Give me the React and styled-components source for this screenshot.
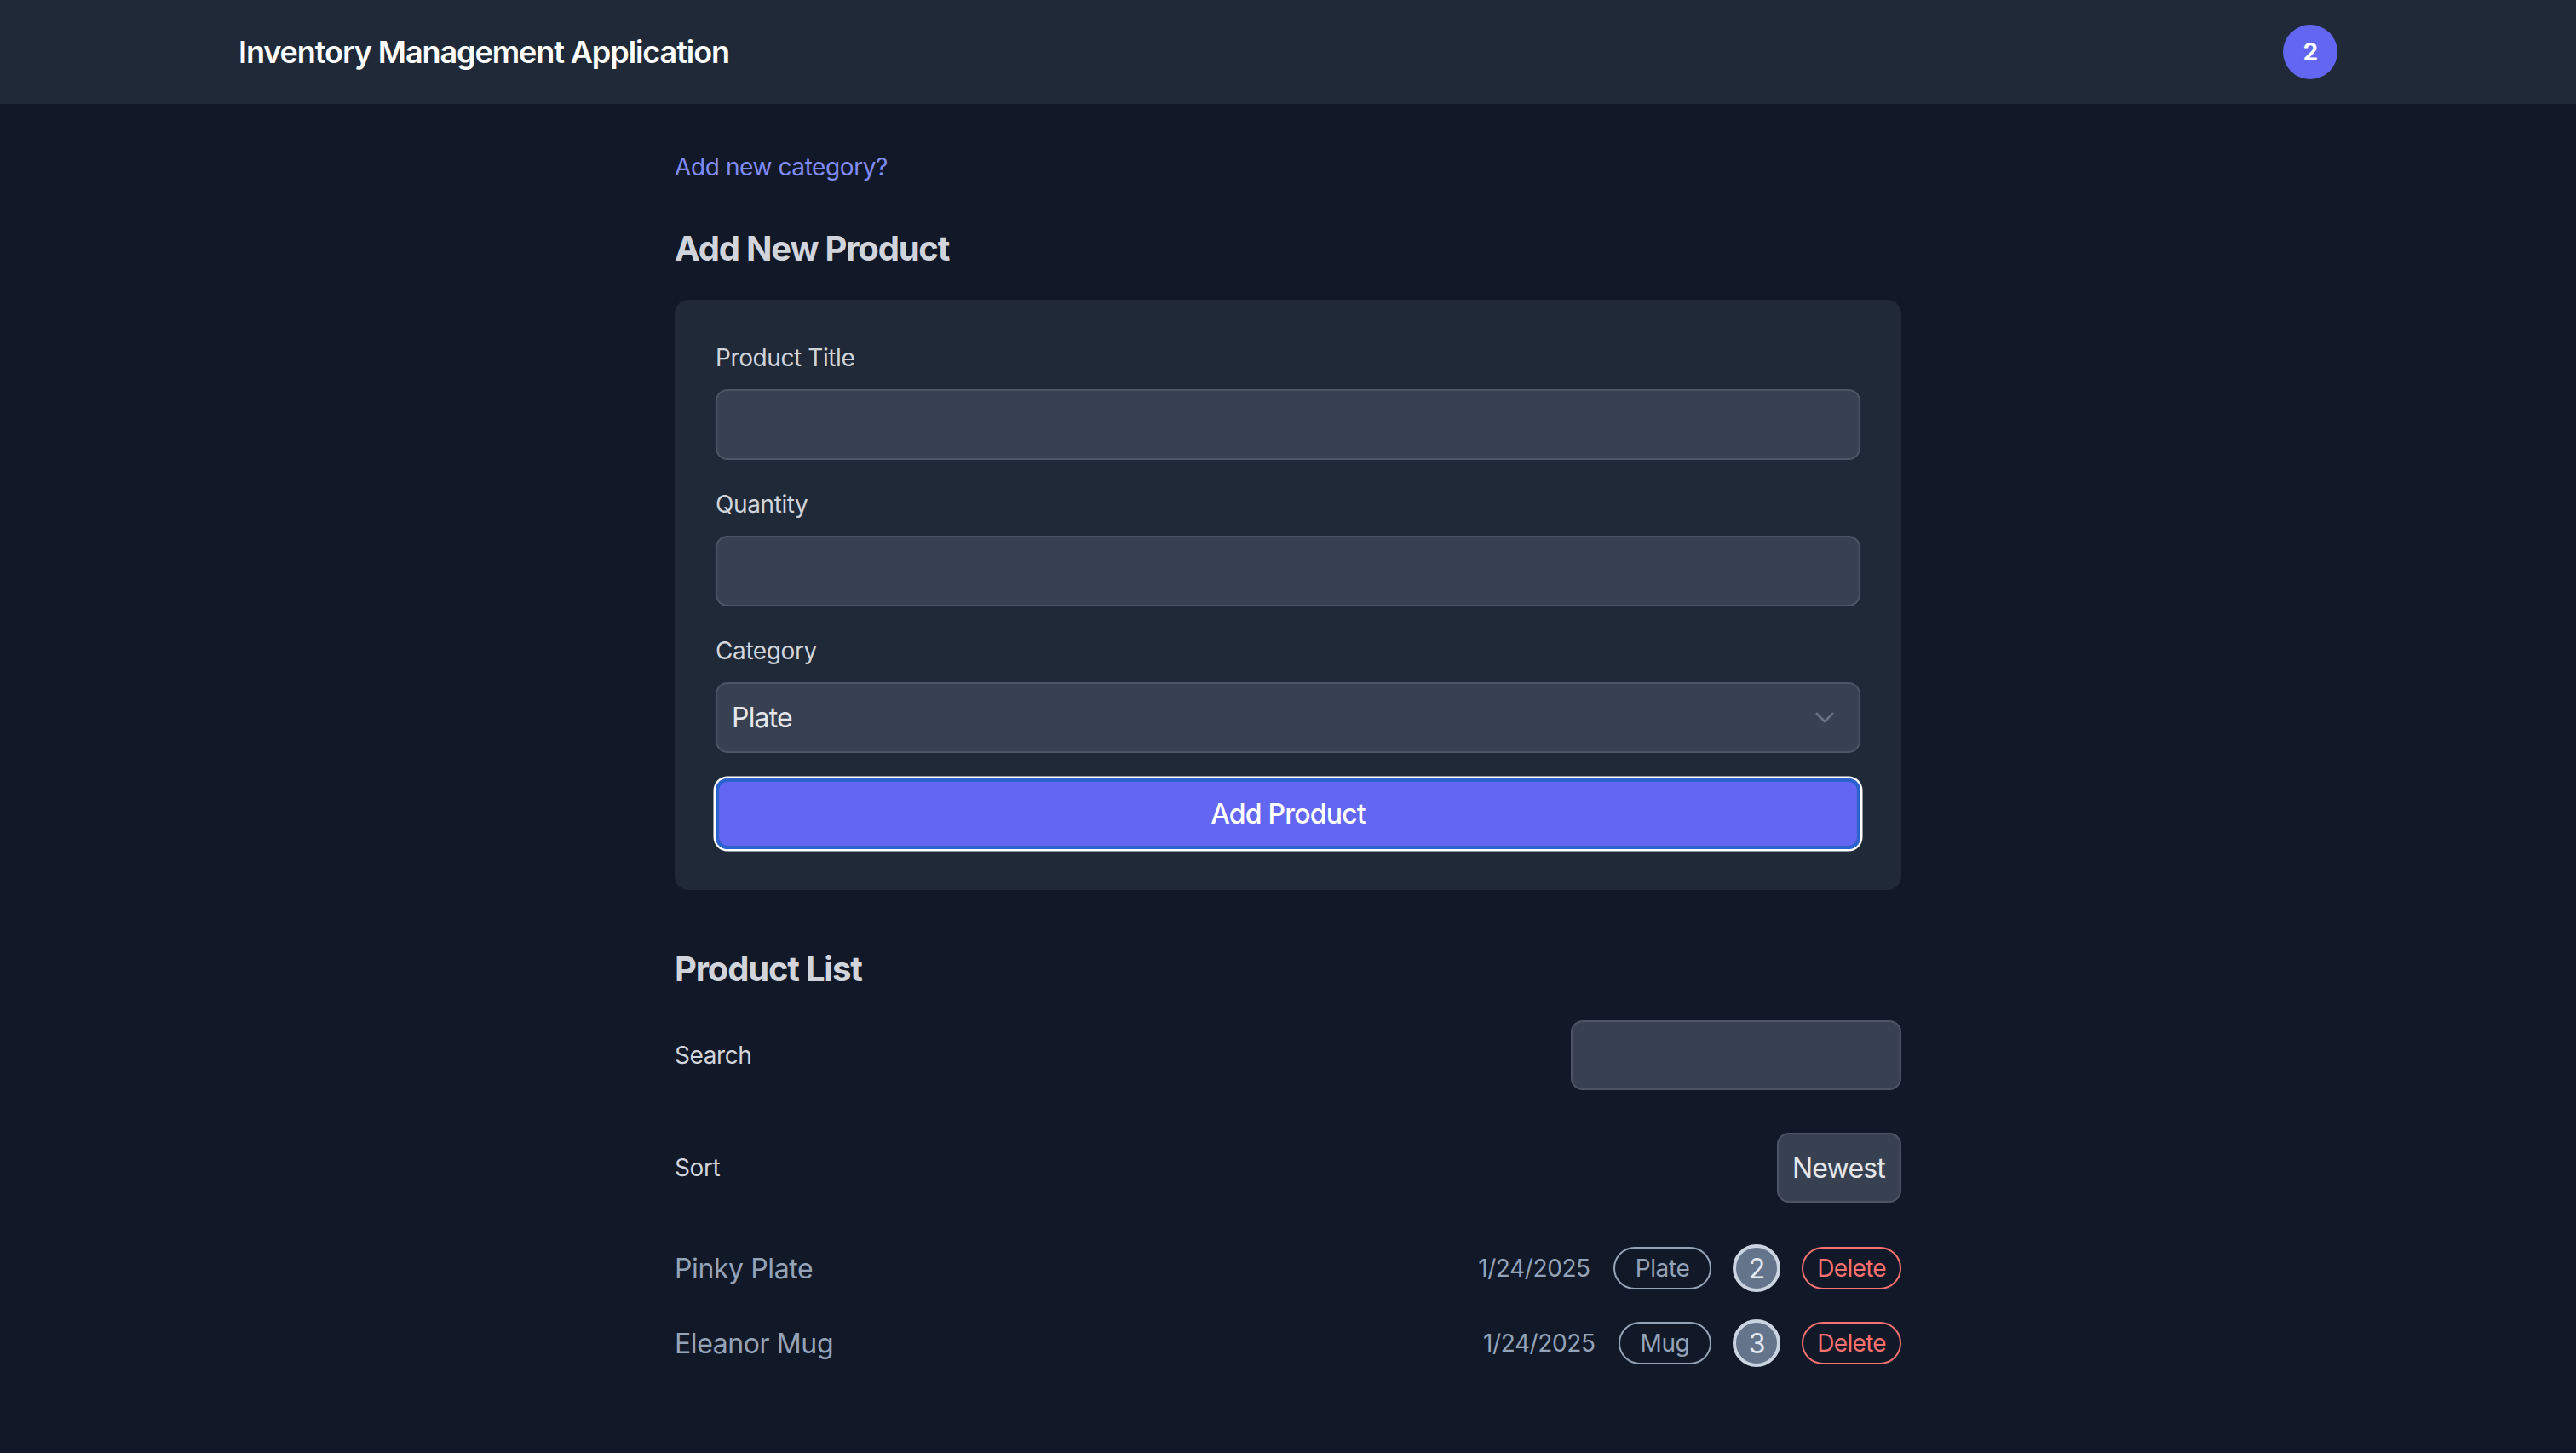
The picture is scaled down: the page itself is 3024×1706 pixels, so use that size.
import React, { useState } from "react";
import styled, { createGlobalStyle } from "styled-components";

const GlobalStyle = createGlobalStyle`
  * { box-sizing: border-box; }
  body {
    margin: 0;
    background: #111827;
    font-family: Inter, "Noto Sans", "Liberation Sans", sans-serif;
    letter-spacing: -0.025em;
    color: #d1d5db;
  }
  input, select, button {
    letter-spacing: -0.025em;
  }
`;

const products = [
    { id: 1, title: "Pinky Plate", date: "1/24/2025", category: "Plate", qty: 2 },
    { id: 2, title: "Eleanor Mug", date: "1/24/2025", category: "Mug", qty: 3 },
];

export default function App() {
    const [category, setCategory] = useState("Plate");
    const [sort, setSort] = useState("newest");

    return (
        <>
            <GlobalStyle />
            <Header>
                <div className="inner">
                    <h1>Inventory Management Application</h1>
                    <Badge>2</Badge>
                </div>
            </Header>

            <Main>
                <NewCategoryLink href="#">Add new category?</NewCategoryLink>

                <SectionTitle>Add New Product</SectionTitle>
                <FormCard onSubmit={(e) => e.preventDefault()}>
                    <Field>
                        <Label>Product Title</Label>
                        <TextInput type="text" />
                    </Field>
                    <Field>
                        <Label>Quantity</Label>
                        <TextInput type="number" />
                    </Field>
                    <Field>
                        <Label>Category</Label>
                        <SelectWrap>
                            <CategorySelect value={category} onChange={(e) => setCategory(e.target.value)}>
                                <option value="Plate">Plate</option>
                                <option value="Mug">Mug</option>
                            </CategorySelect>
                            <svg viewBox="0 0 24 14" fill="none" stroke="#6b7280" strokeWidth="3" strokeLinecap="round" strokeLinejoin="round">
                                <path d="M2 2l10 10L22 2" />
                            </svg>
                        </SelectWrap>
                    </Field>
                    <SubmitButton type="submit">Add Product</SubmitButton>
                </FormCard>

                <SectionTitle $top={65}>Product List</SectionTitle>
                <FilterRow>
                    <span>Search</span>
                    <SearchInput type="text" />
                </FilterRow>
                <FilterRow $last>
                    <span>Sort</span>
                    <SortSelect value={sort} onChange={(e) => setSort(e.target.value)}>
                        <option value="newest">Newest</option>
                        <option value="oldest">Oldest</option>
                    </SortSelect>
                </FilterRow>

                <ProductList>
                    {products.map((p) => (
                        <ProductRow key={p.id}>
                            <span className="name">{p.title}</span>
                            <div className="meta">
                                <span className="date">{p.date}</span>
                                <Pill>{p.category}</Pill>
                                <Count>{p.qty}</Count>
                                <Pill $danger as="button">Delete</Pill>
                            </div>
                        </ProductRow>
                    ))}
                </ProductList>
            </Main>
        </>
    );
}

const Header = styled.header`
    width: 100%;
    height: 122px;
    background: #1f2937;
    .inner {
        max-width: 2560px;
        height: 100%;
        margin: 0 auto;
        padding: 0 48px;
        display: flex;
        align-items: center;
        justify-content: space-between;
    }
    h1 {
        margin: 0;
        font-size: 36px;
        font-weight: 600;
        color: #ffffff;
        letter-spacing: -0.03em;
    }
`;

const Badge = styled.div`
    width: 64px;
    height: 64px;
    border-radius: 50%;
    background: #6366f1;
    color: #fff;
    font-size: 28px;
    font-weight: 700;
    display: flex;
    align-items: center;
    justify-content: center;
`;

const Main = styled.main`
    width: 1440px;
    margin: 0 auto;
    padding-top: 54px;
    padding-bottom: 80px;
`;

const NewCategoryLink = styled.a`
    display: block;
    font-size: 28px;
    line-height: 40px;
    color: #818cf8;
    text-decoration: none;
`;

const SectionTitle = styled.h2`
    margin: ${(p) => p.$top || 48}px 0 32px;
    font-size: 40px;
    line-height: 56px;
    font-weight: 700;
    color: #d1d5db;
    letter-spacing: -0.03em;
`;

const FormCard = styled.form`
    background: #1f2937;
    border-radius: 16px;
    padding: 48px;
    display: flex;
    flex-direction: column;
`;

const Field = styled.div`
    display: flex;
    flex-direction: column;
    margin-bottom: 32px;
    &:nth-of-type(3) {
        margin-bottom: 30px;
    }
`;

const Label = styled.label`
    font-size: 28px;
    line-height: 40px;
    color: #d1d5db;
    margin-bottom: 17px;
`;

const TextInput = styled.input`
    height: 83px;
    width: 100%;
    background: #374151;
    border: 2px solid #4b5563;
    border-radius: 14px;
    padding: 0 18px;
    font-family: inherit;
    font-size: 32px;
    color: #e5e7eb;
    outline: none;
    -moz-appearance: textfield;
    &::-webkit-inner-spin-button { -webkit-appearance: none; }
`;

const SelectWrap = styled.div`
    position: relative;
    svg {
        position: absolute;
        right: 31px;
        top: 35px;
        width: 22px;
        height: 13px;
        pointer-events: none;
    }
`;

const CategorySelect = styled.select`
    appearance: none;
    -webkit-appearance: none;
    height: 83px;
    width: 100%;
    background: #374151;
    border: 2px solid #4b5563;
    border-radius: 14px;
    padding: 0 17px;
    font-family: inherit;
    font-size: 32px;
    color: #e5e7eb;
    outline: none;
`;

const SubmitButton = styled.button`
    height: 83px;
    width: 100%;
    border: none;
    border-radius: 14px;
    background: #6366f1;
    box-shadow: inset 0 0 0 4px #2b62cc, 0 0 0 2.5px #ffffff;
    color: #ffffff;
    font-family: inherit;
    font-size: 32px;
    font-weight: 500;
    cursor: pointer;
`;

const FilterRow = styled.div`
    display: flex;
    align-items: center;
    justify-content: space-between;
    margin-bottom: ${(p) => (p.$last ? 49 : 50)}px;
    span {
        font-size: 28px;
        color: #d1d5db;
    }
`;

const SearchInput = styled.input`
    width: 388px;
    height: 82px;
    background: #374151;
    border: 2px solid #4b5563;
    border-radius: 14px;
    padding: 0 18px;
    font-family: inherit;
    font-size: 32px;
    color: #e5e7eb;
    outline: none;
`;

const SortSelect = styled.select`
    appearance: none;
    -webkit-appearance: none;
    height: 82px;
    background: #374151;
    border: 2px solid #4b5563;
    border-radius: 14px;
    padding: 0 16px;
    font-family: inherit;
    font-size: 32px;
    color: #e5e7eb;
    outline: none;
`;

const ProductList = styled.div`
    display: flex;
    flex-direction: column;
    gap: 32px;
`;

const ProductRow = styled.div`
    display: flex;
    align-items: center;
    justify-content: space-between;
    .name {
        font-size: 32px;
        color: #94a3b8;
    }
    .meta {
        display: flex;
        align-items: center;
        gap: 25px;
    }
    .date {
        font-size: 28px;
        color: #94a3b8;
        margin-right: 2px;
    }
`;

const Pill = styled.span`
    height: 50px;
    display: inline-flex;
    align-items: center;
    padding: 0 ${(p) => (p.$danger ? 16 : 24)}px;
    border: 2px solid ${(p) => (p.$danger ? "#f87171" : "#94a3b8")};
    border-radius: 999px;
    background: transparent;
    color: ${(p) => (p.$danger ? "#f87171" : "#94a3b8")};
    font-family: inherit;
    font-size: 28px;
    cursor: ${(p) => (p.$danger ? "pointer" : "default")};
`;

const Count = styled.span`
    width: 56px;
    height: 56px;
    border-radius: 50%;
    border: 4px solid #cbd5e1;
    background: #64748b;
    color: #e2e8f0;
    font-size: 32px;
    display: flex;
    align-items: center;
    justify-content: center;
`;
